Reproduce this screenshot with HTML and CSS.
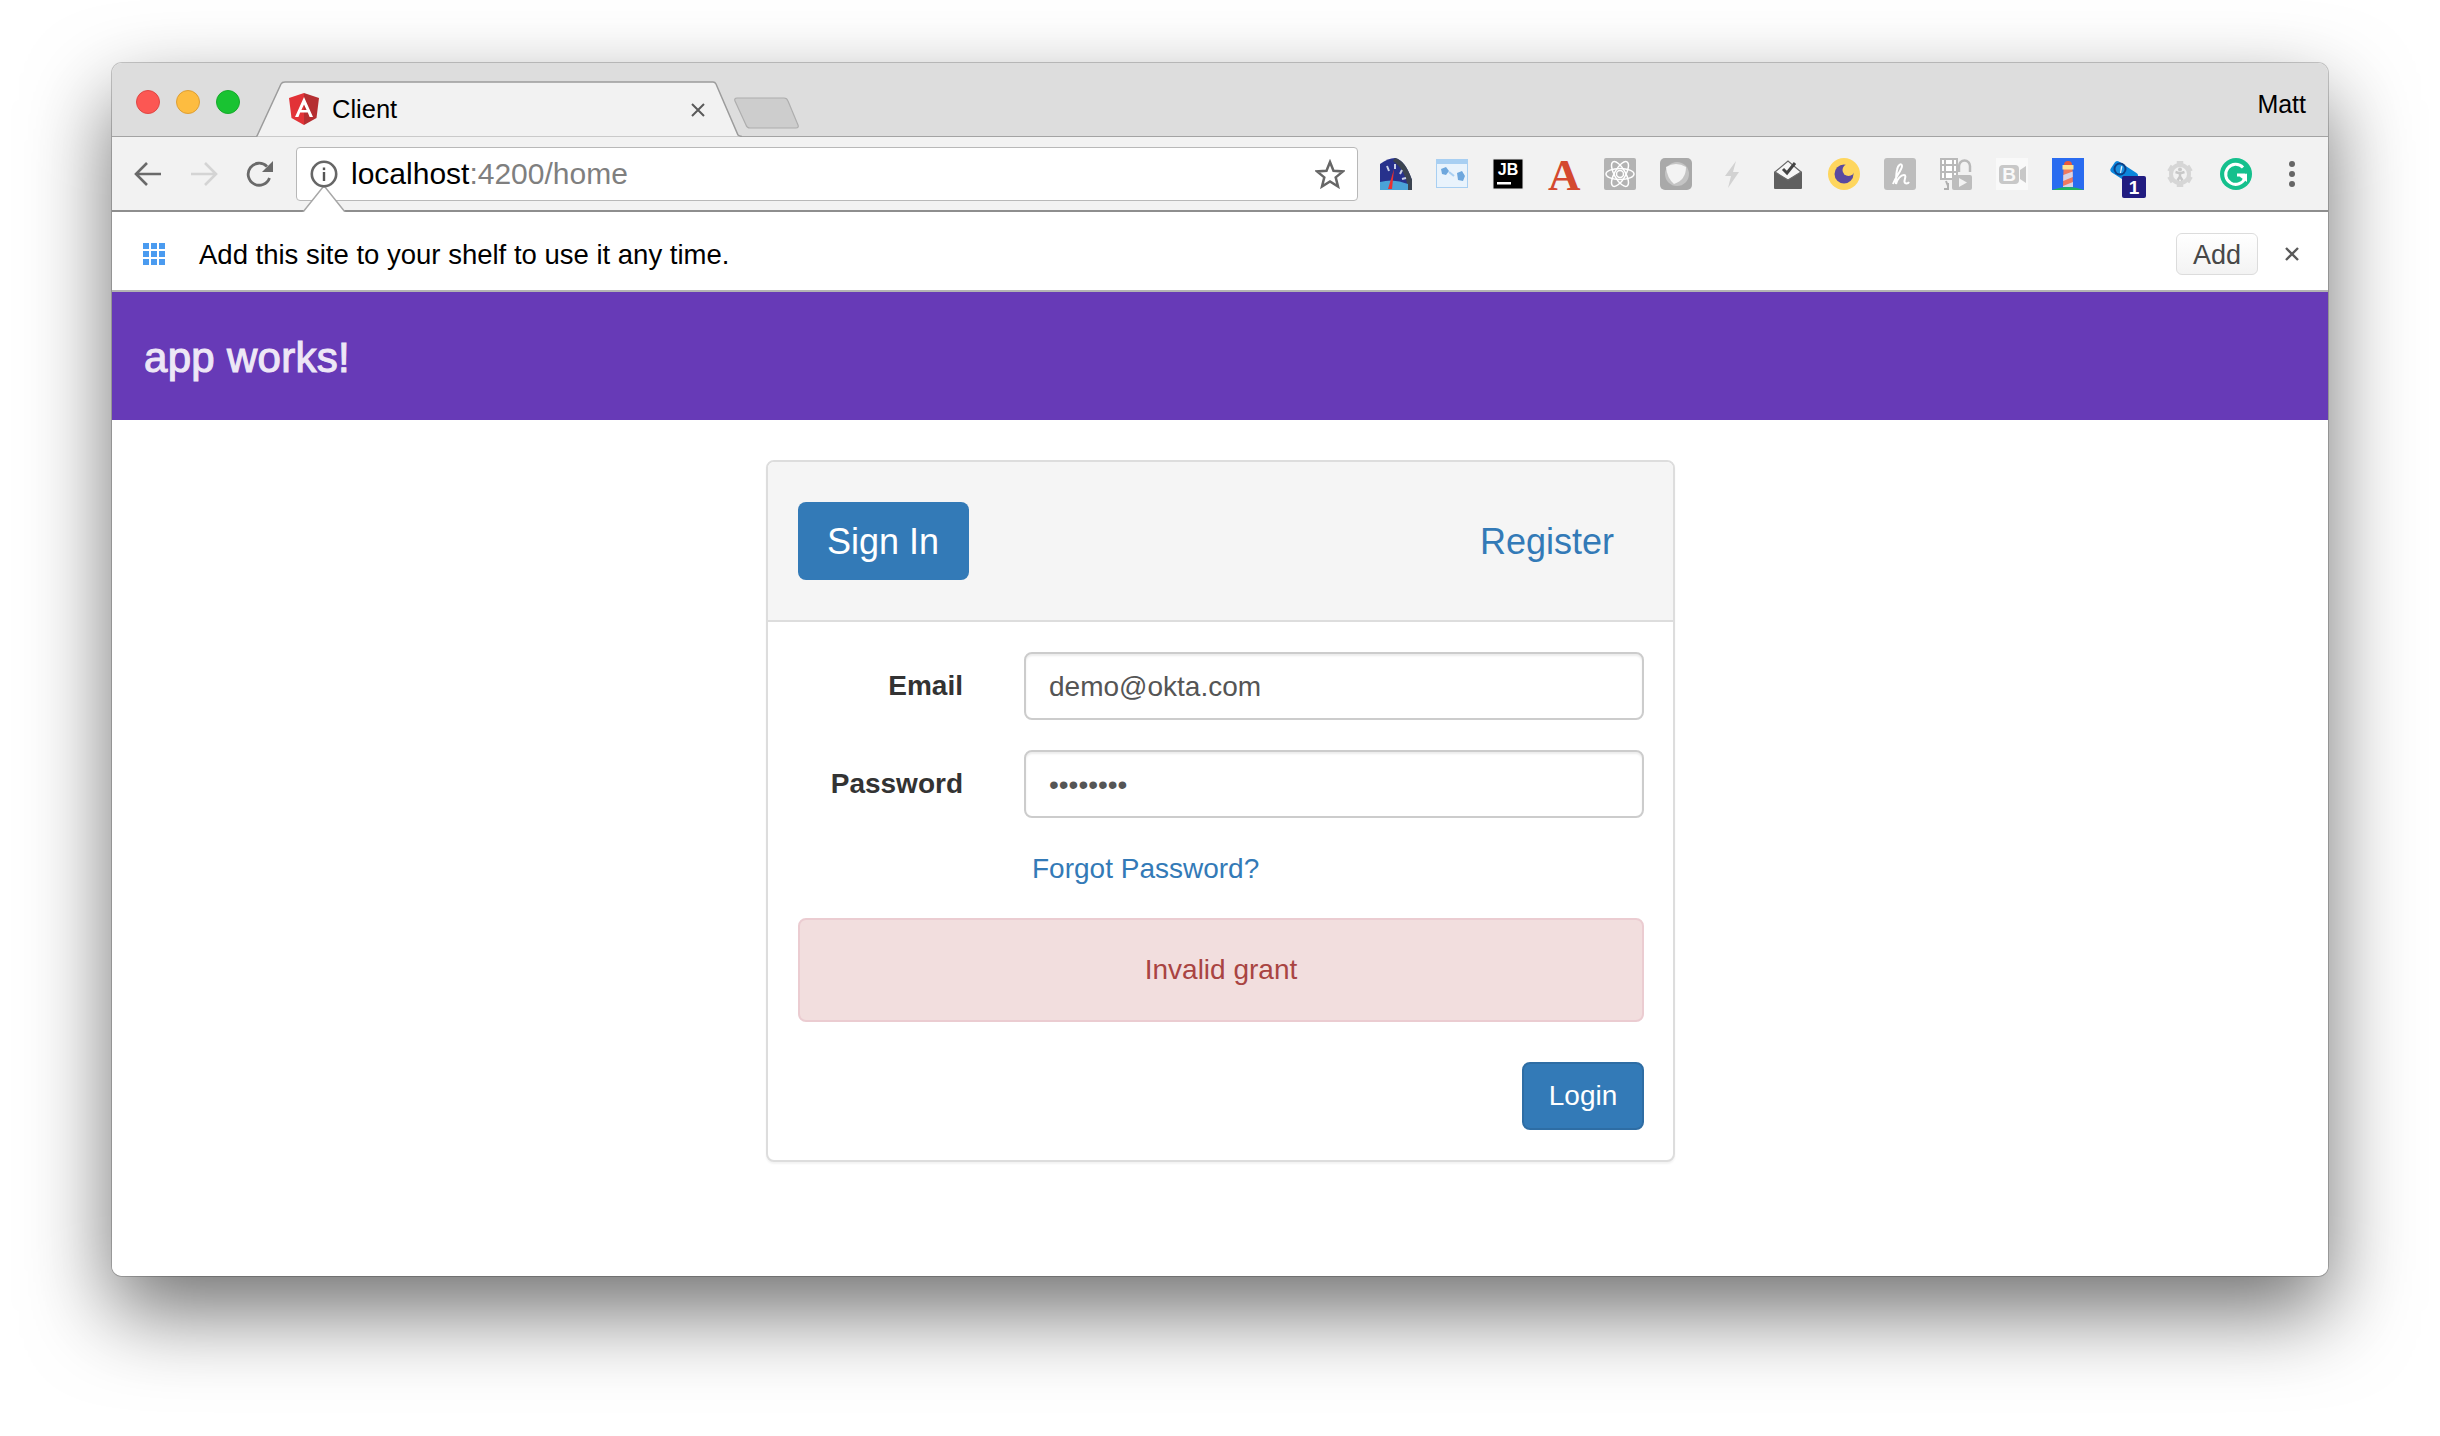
FILE: index.html
```html
<!doctype html>
<html lang="en">
  <head>
    <meta charset="UTF-8" />
    <title>Client</title>
    <link rel="stylesheet" href="styles.css">
  </head>

  <body>
    <div class="window">
      <div class="tabstrip">
        <span class="lights">
          <i class="light red"></i>
          <i class="light yellow"></i>
          <i class="light green"></i>
        </span>
        <div class="tab">
          <svg class="tab-shape" viewBox="0 0 486 56" width="486" height="56">
            <path d="M0 55.5 L1 55 L25 3 Q26 1 29 1 H457 Q459 1 460 3 L482 54 Q483 55 486 55.5" fill="#f2f2f2" stroke="#9c9c9c" stroke-width="1.5" />
          </svg>
          <svg class="favicon" viewBox="0 0 30 32" width="30" height="32">
            <path d="M15 0 L0 5 L2.5 25 L15 32 Z" fill="#e23237" />
            <path d="M15 0 L30 5 L27.5 25 L15 32 Z" fill="#b52e31" />
            <path d="M15 4 L6 24 H9.4 L11.2 19.6 H18.8 L20.6 24 H24 Z M15 11.5 L17.6 17 H12.4 Z" fill="#fff" fill-rule="evenodd" />
          </svg>
          <span class="tab-title">Client</span>
          <svg class="tab-close" viewBox="0 0 14 14" width="14" height="14">
            <path d="M1 1 L13 13 M13 1 L1 13" stroke="#5a5a5a" stroke-width="2" />
          </svg>
        </div>
        <svg class="new-tab" viewBox="0 0 66 32" width="66" height="32">
          <path d="M3 1 H50 Q53 1 54 4 L64 28 Q65 31 62 31 H16 Q13 31 12 28 L1 4 Q0 1 3 1 Z" fill="#cdcdcd" stroke="#aeaeae" stroke-width="1.2" />
        </svg>
        <span class="profile">Matt</span>
      </div>

      <div class="toolbar">
        <svg class="nav-icon" viewBox="0 0 28 28" width="28" height="28">
          <path d="M27 14 H3 M13 3 L2 14 L13 25" fill="none" stroke="#6a6a6a" stroke-width="2.6" />
        </svg>
        <svg class="nav-icon" viewBox="0 0 28 28" width="28" height="28">
          <path d="M1 14 H25 M15 3 L26 14 L15 25" fill="none" stroke="#d4d4d4" stroke-width="2.6" />
        </svg>
        <svg class="nav-icon" viewBox="0 0 28 28" width="28" height="28">
          <path d="M23.5 18 A11 11 0 1 1 21 6.500" fill="none" stroke="#6a6a6a" stroke-width="2.8" />
          <path d="M27 1 V12 H16 Z" fill="#6a6a6a" />
        </svg>

        <div class="omnibox">
          <svg class="info-icon" viewBox="0 0 28 28" width="28" height="28">
            <circle cx="14" cy="14" r="12.2" fill="#fff" stroke="#666" stroke-width="2.6" />
            <rect x="12.800" y="12" width="2.400" height="9" fill="#555" />
            <rect x="12.800" y="7.500" width="2.400" height="2.600" fill="#555" />
          </svg>
          <span class="url">localhost<span class="url-path">:4200/home</span></span>
          <svg class="star" viewBox="0 0 30 30" width="30" height="30">
            <path d="M15 3 L18.500 11.700 L28 12.400 L20.700 18.400 L23 27.500 L15 22.500 L7 27.500 L9.300 18.400 L2 12.400 L11.500 11.700 Z" fill="none" stroke="#666" stroke-width="2.500" />
          </svg>
        </div>

        <div class="extensions">
          <svg viewBox="0 0 32 32" width="32" height="32">
            <path d="M0 32 V6 Q8 0 15 0 Q25 2 32 22 V32 Z" fill="#27318c" />
            <path d="M15 0 Q25 2 32 22 V32 H28 Q26 12 13 3 Z" fill="#3c4450" />
            <path d="M0 32 V24 Q14 20 28 26 V32 Z" fill="#4aa3d8" />
            <path d="M8 31 L14 11 L12 31 Z" fill="#ea3030" />
            <path d="M7 8 L9 13 M15 6 L15 11 M22 12 L20 16 M26 20 L22 21" stroke="#c9d0e6" stroke-width="2" />
          </svg>
          <svg viewBox="0 0 32 32" width="32" height="32">
            <rect x="0.500" y="1.500" width="31" height="28" fill="#e9f3fc" stroke="#a8cff2" />
            <rect x="0" y="1" width="32" height="5" fill="#a8cff2" />
            <path d="M5 11 L10 9 L13 13 L10 17 L6 16 Z M21 15 L26 13 L29 18 L27 23 L22 22 Z" fill="#6ea7dd" />
            <path d="M13 14 L18 18" stroke="#a8cff2" stroke-width="2" />
          </svg>
          <svg viewBox="0 0 32 32" width="32" height="32">
            <rect x="1" y="1" width="30" height="30" fill="#000" stroke="#e8e8e8" />
            <text class="jb-text" x="16" y="17" text-anchor="middle">JB</text>
            <rect x="5" y="24" width="14" height="2.500" fill="#fff" />
          </svg>
          <span class="acrobat">A</span>
          <svg viewBox="0 0 32 32" width="32" height="32">
            <rect width="32" height="32" rx="2" fill="#b3b3b3" />
            <g fill="none" stroke="#fff" stroke-width="1.500">
              <ellipse cx="16" cy="16" rx="14" ry="5.500" />
              <ellipse cx="16" cy="16" rx="14" ry="5.500" transform="rotate(60 16 16)" />
              <ellipse cx="16" cy="16" rx="14" ry="5.500" transform="rotate(120 16 16)" />
              <circle cx="16" cy="16" r="3.500" />
            </g>
          </svg>
          <svg viewBox="0 0 32 32" width="32" height="32">
            <rect width="32" height="32" rx="5" fill="#a9a9a9" />
            <circle cx="17" cy="16" r="12" fill="#c4c4c4" />
            <path d="M6 9 Q16 3 26 9 Q26 22 14 26 Q7 20 6 9 Z" fill="#f3f3f3" />
          </svg>
          <svg viewBox="0 0 32 32" width="32" height="32">
            <path d="M20 3 L9 18 H15 L12 30 L23 14 H17 Z" fill="#d2d2d2" />
          </svg>
          <svg viewBox="0 0 32 32" width="32" height="32">
            <path d="M2 14 L16 5 L30 14 V30 Q30 31 29 31 H3 Q2 31 2 30 Z" fill="#5f5f5f" />
            <path d="M3 14 L16 3 L29 14 L16 22 Z" fill="#f7f7f7" stroke="#6a6a6a" stroke-width="1.200" />
            <path d="M11 11 L15 15 L23 5" fill="none" stroke="#444" stroke-width="3" />
          </svg>
          <svg viewBox="0 0 32 32" width="32" height="32">
            <circle cx="16" cy="16" r="16" fill="#fed65e" />
            <circle cx="16" cy="16" r="9.500" fill="#5a4a9f" />
            <circle cx="20.500" cy="12" r="6" fill="#fed65e" />
          </svg>
          <svg viewBox="0 0 32 32" width="32" height="32">
            <rect width="32" height="32" rx="3" fill="#bdbdbd" />
            <path d="M9 26 C12 18 18 12 18 8 C18 5 14 6 13 12 C12 17 12 22 12 26 C13 21 17 17 20 17 C23 17 20 22 20.500 24 C21 26 24 26 25 24" fill="none" stroke="#fff" stroke-width="2" />
          </svg>
          <svg viewBox="0 0 32 32" width="32" height="32">
            <rect x="1" y="1" width="16" height="20" fill="#fff" stroke="#b9b9b9" stroke-width="2" />
            <path d="M5 1 V21 M13 1 V21 M1 7 H17 M1 14 H17" stroke="#b9b9b9" stroke-width="2" />
            <path d="M19 14 V8 A5.500 5.500 0 0 1 30 8 V14" fill="none" stroke="#b9b9b9" stroke-width="2.500" />
            <rect x="12" y="17" width="20" height="15" rx="2" fill="#bdbdbd" />
            <path d="M19 20 L27 24.500 L19 29 Z" fill="#f2f2f2" />
            <path d="M6 23 L8 28 M4 31 H8 V25" fill="none" stroke="#b0b0b0" stroke-width="2" />
          </svg>
          <svg viewBox="0 0 32 32" width="32" height="32">
            <rect width="32" height="32" fill="#f9f9f9" />
            <rect x="3" y="7" width="20" height="19" rx="4" fill="#c8c8c8" />
            <text class="b-text" x="13" y="23" text-anchor="middle">B</text>
            <path d="M24 12 L30 8 V25 L24 21 Z" fill="#c8c8c8" />
          </svg>
          <svg viewBox="0 0 32 32" width="32" height="32">
            <rect width="32" height="32" fill="#2a6cf0" />
            <path d="M0 32 Q16 26 32 32 Z" fill="#1fb45c" />
            <path d="M11.500 11 H20.500 L21 29 H11 Z" fill="#f07a5e" />
            <path d="M11.300 17 L20.700 13.500 L20.800 19 L11.200 23 Z M11 28 L21 24 V29 H11 Z" fill="#d6d3e6" />
            <rect x="10.500" y="7" width="11" height="4.500" fill="#fde293" />
            <path d="M12 7 Q12 3 16 3 Q20 3 20 7 Z" fill="#ea5a3a" />
          </svg>
          <span class="ext-badged">
            <svg viewBox="0 0 32 32" width="32" height="32">
              <rect x="1" y="8" width="27" height="13" rx="3" fill="#0b86dc" transform="rotate(33 14 14)" />
              <circle cx="10" cy="11" r="6.500" fill="#0c3f86" />
              <circle cx="10" cy="11" r="4.500" fill="#1b8fde" />
              <path d="M10 15 L11 8 L12.500 8.500 L11 15 Z" fill="#e8f4fc" />
            </svg>
            <span class="ext-badge">1</span>
          </span>
          <svg viewBox="0 0 32 32" width="32" height="32">
            <path d="M16 3 V29 M5 9.500 L27 22.500 M5 22.500 L27 9.500" stroke="#d6d6d6" stroke-width="6.500" />
            <circle cx="16" cy="16" r="11" fill="#d6d6d6" />
            <circle cx="16" cy="16" r="7" fill="#f2f2f2" />
            <circle cx="16" cy="11.500" r="2" fill="#c8c8c8" />
            <path d="M11.500 14 L16 15.500 L20.500 14 M16 15.500 V18.500 L13.500 22.500 M16 18.500 L18.500 22.500" fill="none" stroke="#c8c8c8" stroke-width="2.400" />
          </svg>
          <svg viewBox="0 0 32 32" width="32" height="32">
            <circle cx="16" cy="16" r="16" fill="#15c08d" />
            <path d="M23 9.500 A10 10 0 1 0 25 20" fill="none" stroke="#fff" stroke-width="3" />
            <path d="M17 17 H25.500" stroke="#fff" stroke-width="3" />
            <path d="M27 15.500 V24 L19.500 18.500 Z" fill="#fff" />
          </svg>
        </div>

        <span class="menu-dots"><i></i><i></i><i></i></span>
        <svg class="bubble" viewBox="0 0 44 27" width="44" height="27">
          <path d="M1 26 L22 1 L43 26 Z" fill="#fff" />
          <path d="M1 26 L21 1 H23 L43 26" fill="none" stroke="#a8a8a8" stroke-width="1.500" />
        </svg>
      </div>

      <div class="infobar">
        <svg class="shelf-icon" viewBox="0 0 22 22" width="22" height="22">
          <g fill="#4a9bf0">
            <rect width="6" height="6" /><rect x="8" width="6" height="6" /><rect x="16" width="6" height="6" />
            <rect y="8" width="6" height="6" /><rect x="8" y="8" width="6" height="6" /><rect x="16" y="8" width="6" height="6" />
            <rect y="16" width="6" height="6" /><rect x="8" y="16" width="6" height="6" /><rect x="16" y="16" width="6" height="6" />
          </g>
        </svg>
        <span class="infobar-text">Add this site to your shelf to use it any time.</span>
        <button class="infobar-add">Add</button>
        <svg class="infobar-close" viewBox="0 0 14 14" width="14" height="14">
          <path d="M1 1 L13 13 M13 1 L1 13" stroke="#5a5a5a" stroke-width="2.400" />
        </svg>
      </div>

      <header class="app-bar">app works!</header>

      <main class="content">
        <section class="card">
          <div class="card-header">
            <a class="pill active">Sign In</a>
            <a class="pill">Register</a>
          </div>
          <form class="card-body">
            <div class="form-row">
              <label class="form-label" for="email">Email</label>
              <input class="form-input" id="email" type="text" value="demo@okta.com" />
            </div>
            <div class="form-row">
              <label class="form-label" for="password">Password</label>
              <input class="form-input" id="password" type="password" value="12345678" />
            </div>
            <a class="forgot">Forgot Password?</a>
            <div class="alert">Invalid grant</div>
            <div class="form-actions">
              <button class="login" type="button">Login</button>
            </div>
          </form>
        </section>
      </main>
    </div>
  </body>
</html>
```

FILE: styles.css
```css
html {
  background: #fff;
}

body {
  margin: 0;
  padding: 63px 112px 0;
  height: 1436px;
  box-sizing: border-box;
  overflow: hidden;
  font-family: "Liberation Sans", Arial, sans-serif;
}

.window {
  width: 2216px;
  height: 1213px;
  display: flex;
  flex-direction: column;
  background: #fff;
  border-radius: 10px;
  overflow: hidden;
}

/* shadow can't sit on .window because of overflow: hidden on the corners */
body::before {
  content: "";
  position: absolute;
  left: 112px;
  top: 63px;
  width: 2216px;
  height: 1213px;
  border-radius: 10px;
  box-shadow: 0 0 0 1px rgba(0, 0, 0, 0.2), 0 36px 84px rgba(0, 0, 0, 0.56);
}

.window > * {
  position: relative;
}

/* tab strip */
.tabstrip {
  height: 74px;
  flex: none;
  display: flex;
  align-items: flex-start;
  box-sizing: border-box;
  background: #dddddd;
  border-bottom: 1.5px solid #a3a3a3;
}

.lights {
  display: flex;
  gap: 16px;
  padding: 27px 0 0 24px;
}

.light {
  width: 24px;
  height: 24px;
  border-radius: 50%;
  box-sizing: border-box;
}

.red {
  background: #fc5753;
  border: 1px solid #df4744;
}

.yellow {
  background: #fdbc40;
  border: 1px solid #de9f34;
}

.green {
  background: #19c332;
  border: 1px solid #17aa2b;
}

.tab {
  position: relative;
  width: 486px;
  height: 56px;
  margin: 18px 0 0 16px;
  display: flex;
  align-items: center;
  padding: 0 0 0 33px;
  box-sizing: border-box;
}

.tab-shape {
  position: absolute;
  left: 0;
  top: 0;
}

.favicon {
  position: relative;
}

.tab-title {
  position: relative;
  margin-left: 13px;
  font-size: 25.500px;
  color: #000;
}

.tab-close {
  position: absolute;
  left: 435px;
  top: 22px;
}

.new-tab {
  margin: 34px 0 0 -8px;
}

.profile {
  margin: 27px 22px 0 auto;
  font-size: 25px;
  color: #000;
}

/* toolbar */
.toolbar {
  height: 75px;
  flex: none;
  display: flex;
  align-items: center;
  box-sizing: border-box;
  padding: 1px 20px 0 22px;
  background: #f2f2f2;
  border-bottom: 2px solid #8e8e8e;
}

.nav-icon {
  flex: none;
  margin-right: 28px;
}

.nav-icon:nth-child(3) {
  margin-right: 22px;
}

.omnibox {
  width: 1062px;
  height: 54px;
  flex: none;
  display: flex;
  align-items: center;
  box-sizing: border-box;
  padding: 0 12px 0 13px;
  background: #fff;
  border: 1.500px solid #b8b8b8;
  border-radius: 4px;
  font-size: 30px;
  color: #000;
}

.info-icon {
  flex: none;
  position: relative;
  z-index: 1;
}

.url {
  margin-left: 13px;
}

.url-path {
  color: #7f7f7f;
}

.star {
  margin-left: auto;
}

.extensions {
  display: flex;
  gap: 24px;
  margin-left: 22px;
  align-items: center;
}

.extensions svg {
  display: block;
}

.jb-text {
  font: bold 16px "Liberation Sans", sans-serif;
  fill: #fff;
}

.acrobat {
  width: 32px;
  height: 32px;
  font: bold 45px/34px "Liberation Serif", serif;
  color: #d4492f;
  text-align: center;
}

.b-text {
  font: bold 19px "Liberation Sans", sans-serif;
  fill: #f9f9f9;
}

.ext-badged {
  position: relative;
  display: block;
  width: 32px;
  height: 32px;
  margin-left: 2px;
  margin-right: -2px;
}

.ext-badge {
  position: absolute;
  left: 12px;
  top: 18px;
  width: 24px;
  height: 22px;
  background: #211c80;
  border-radius: 2px;
  color: #fff;
  font-size: 19px;
  font-weight: bold;
  line-height: 23px;
  text-align: center;
}

.menu-dots {
  margin-left: 37px;
  display: flex;
  flex-direction: column;
  gap: 4px;
}

.menu-dots i {
  width: 6px;
  height: 6px;
  border-radius: 50%;
  background: #666;
}

.bubble {
  position: absolute;
  left: 190px;
  top: 49px;
}

/* shelf prompt */
.infobar {
  height: 80px;
  flex: none;
  display: flex;
  align-items: center;
  box-sizing: border-box;
  padding: 5px 29px 0 31px;
  background: #fff;
  border-bottom: 2px solid #b3b3b3;
}

.infobar-text {
  margin: 2px 0 0 34px;
  font-size: 27.500px;
  color: #000;
}

.infobar-add {
  margin-left: auto;
  width: 82px;
  height: 42px;
  padding: 3px 0 0;
  background: linear-gradient(#ffffff, #f3f3f3);
  border: 1.500px solid #dcdcdc;
  border-radius: 6px;
  font: 27px "Liberation Sans", sans-serif;
  color: #484848;
}

.infobar-close {
  margin-left: 27px;
}

/* page */
.app-bar {
  height: 128px;
  flex: none;
  display: flex;
  align-items: center;
  box-sizing: border-box;
  padding: 4px 0 0 32px;
  background: #673ab7;
  color: #ede7f6;
  font-size: 42px;
  letter-spacing: 0.3px;
  -webkit-text-stroke: 1.1px #ede7f6;
}

.content {
  flex: 1;
  padding: 40px 0 0 1px;
  background: #fff;
}

.card {
  width: 909px;
  margin: 0 auto;
  box-sizing: border-box;
  background: #fff;
  border: 2px solid #dddddd;
  border-radius: 8px;
  box-shadow: 0 2px 2px rgba(0, 0, 0, 0.05);
  color: #333;
}

.card-header {
  display: flex;
  justify-content: space-between;
  padding: 40px 29px 40px 30px;
  background: #f5f5f5;
  border-bottom: 2px solid #dddddd;
  border-radius: 6px 6px 0 0;
}

.pill {
  height: 78px;
  box-sizing: border-box;
  padding: 0 30px;
  border-radius: 8px;
  font-size: 36px;
  line-height: 79px;
  color: #337ab7;
}

.pill.active {
  padding: 0 30px 0 29px;
  background: #337ab7;
  color: #fff;
}

.card-body {
  display: flex;
  flex-direction: column;
  padding: 30px 29px 30px 30px;
  font-size: 28px;
}

.form-row {
  display: flex;
  align-items: center;
  margin-bottom: 30px;
}

.form-label {
  width: 165px;
  font-weight: bold;
  text-align: right;
}

.form-input {
  width: 620px;
  height: 68px;
  margin-left: 61px;
  box-sizing: border-box;
  padding: 1px 23px 0;
  background: #fff;
  border: 2px solid #cccccc;
  border-radius: 8px;
  box-shadow: inset 0 2px 2px rgba(0, 0, 0, 0.075);
  font: 28px "Liberation Sans", sans-serif;
  color: #555;
  outline: none;
}

.forgot {
  height: 40px;
  margin: 0 0 30px 234px;
  line-height: 41px;
  color: #337ab7;
}

.alert {
  height: 104px;
  box-sizing: border-box;
  background: #f2dede;
  border: 2px solid #ebccd1;
  border-radius: 8px;
  color: #a94442;
  line-height: 100px;
  text-align: center;
}

.form-actions {
  display: flex;
  justify-content: flex-end;
  margin-top: 40px;
}

.login {
  width: 122px;
  height: 68px;
  padding: 0;
  background: #337ab7;
  border: 2px solid #2e6da4;
  border-radius: 8px;
  font: 28px "Liberation Sans", sans-serif;
  color: #fff;
}
```
